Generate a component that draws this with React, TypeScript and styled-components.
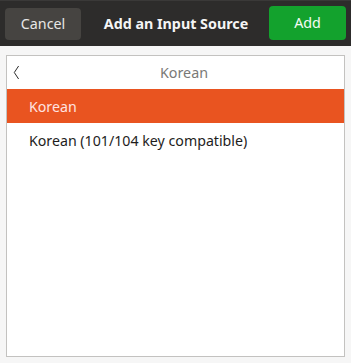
import React from "react";
import styled, { createGlobalStyle } from "styled-components";

const Global = createGlobalStyle`
  html, body { margin: 0; padding: 0; background: #f6f6f6; }
  body { font-family: "Noto Sans", "DejaVu Sans", sans-serif; font-size: 14px; }
  #root { width: 351px; height: 363px; }
`;

const Window = styled.div`
  width: 351px;
  height: 363px;
  display: flex;
  flex-direction: column;
  background: #f6f6f6;
`;

const HeaderBar = styled.header`
  height: 46px;
  box-sizing: border-box;
  background: #2d2c2b;
  border-top: 1px solid #3a3938;
  display: grid;
  grid-template-columns: 76px 1fr 77px;
  align-items: center;
  padding: 0 5px 0 5px;
`;

const Button = styled.button<{ $variant: "cancel" | "add" }>`
  height: ${(p) => (p.$variant === "add" ? "34px" : "32px")};
  margin-top: ${(p) => (p.$variant === "add" ? "-2px" : "0")};
  border: none;
  border-radius: 4px;
  font-family: inherit;
  font-size: 14.3px;
  color: ${(p) => (p.$variant === "add" ? "#f4fbf4" : "#e8e7e5")};
  background: ${(p) => (p.$variant === "add" ? "#13a22d" : "#464441")};
  padding: 0;
  cursor: pointer;
`;

const Title = styled.h1`
  margin: 0;
  text-align: center;
  font-size: 14.3px;
  font-weight: 700;
  color: #f5f5f5;
  padding-left: 2px;
`;

const Body = styled.div`
  flex: 1;
  padding: 9px 6px 6px 6px;
  display: flex;
`;

const Frame = styled.div`
  flex: 1;
  border: 1px solid #c3c2c0;
  background: #ffffff;
  display: flex;
  flex-direction: column;
`;

const ListHeader = styled.div`
  height: 33px;
  display: grid;
  grid-template-columns: 16px 1fr;
  align-items: center;
  padding-left: 6px;
  padding-right: 5px;
`;

const Back = styled.span`
  display: flex;
  align-items: center;
`;

const ListTitle = styled.span`
  text-align: center;
  color: #7a7977;
  font-size: 14.3px;
`;

const Row = styled.div<{ $selected?: boolean }>`
  height: 34px;
  display: flex;
  align-items: center;
  padding-left: 22px;
  font-size: 14.2px;
  background: ${(p) => (p.$selected ? "#e95420" : "transparent")};
  color: ${(p) => (p.$selected ? "#ffe3e0" : "#1e1d1c")};
`;

export default function App() {
  return (
    <Window>
      <Global />
      <HeaderBar>
        <Button $variant="cancel">Cancel</Button>
        <Title>Add an Input Source</Title>
        <Button $variant="add">Add</Button>
      </HeaderBar>
      <Body>
        <Frame>
          <ListHeader>
            <Back>
              <svg width="7" height="15" viewBox="0 0 7 15">
                <path d="M5.6 1 L1.3 7.5 L5.6 14" fill="none" stroke="#2b2b2b" strokeWidth="1" />
              </svg>
            </Back>
            <ListTitle>Korean</ListTitle>
          </ListHeader>
          <Row $selected>Korean</Row>
          <Row>Korean (101/104 key compatible)</Row>
        </Frame>
      </Body>
    </Window>
  );
}
